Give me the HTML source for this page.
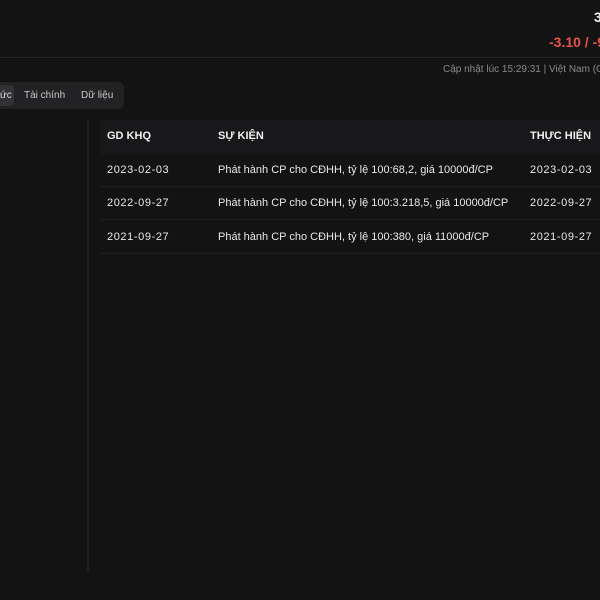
<!DOCTYPE html>
<html><head><meta charset="utf-8"><style>
*{margin:0;padding:0;box-sizing:border-box}
body{width:600px;height:600px;background:#131314;overflow:hidden;position:relative;font-family:"Liberation Sans",sans-serif;color:#e8e8e8}
.abs{position:absolute;white-space:nowrap}
.d{letter-spacing:0.6px}
</style></head><body>
<div class="abs" style="left:594px;top:9px;font-size:14px;font-weight:bold;color:#f0f0f0">3</div>
<div class="abs" style="left:549px;top:34px;font-size:14px;font-weight:bold;color:#e5534b">-3.10 / -9</div>
<div class="abs" style="left:0;top:57px;width:600px;height:1px;background:#262628"></div>
<div class="abs" style="left:443px;top:64px;font-size:10px;color:#8a8a8e">Cập nhật lúc 15:29:31 | Việt Nam (C</div>
<div class="abs" style="left:-10px;top:82px;width:134px;height:27px;background:#222224;border-radius:6px"></div>
<div class="abs" style="left:-10px;top:85px;width:24px;height:21px;background:#323235;border-radius:4px"></div>
<div class="abs" style="left:0;top:90px;font-size:10px;color:#ddd">ức</div>
<div class="abs" style="left:24px;top:90px;font-size:10px;color:#c8c8c8">Tài chính</div>
<div class="abs" style="left:81px;top:90px;font-size:10px;color:#c8c8c8">Dữ liệu</div>
<div class="abs" style="left:87px;top:120px;width:2px;height:452px;background:#1e1e20"></div>
<div class="abs" style="left:100px;top:120px;width:500px;height:34px;background:#18181a"></div>
<div class="abs" style="left:107px;top:130px;font-size:11px;font-weight:bold;color:#f0f0f0">GD KHQ</div>
<div class="abs" style="left:218px;top:130px;font-size:11px;font-weight:bold;color:#f0f0f0">SỰ KIỆN</div>
<div class="abs" style="left:530px;top:130px;font-size:11px;font-weight:bold;color:#f0f0f0">THỰC HIỆN</div>
<div class="abs" style="left:100px;top:186px;width:500px;height:1px;background:#1f1f21"></div>
<div class="abs" style="left:100px;top:219px;width:500px;height:1px;background:#1f1f21"></div>
<div class="abs" style="left:100px;top:253px;width:500px;height:1px;background:#1f1f21"></div>
<div class="abs d" style="left:107px;top:164px;font-size:11px">2023-02-03</div>
<div class="abs" style="left:218px;top:164px;font-size:11px">Phát hành CP cho CĐHH, tỷ lệ 100:68,2, giá 10000đ/CP</div>
<div class="abs d" style="left:530px;top:164px;font-size:11px">2023-02-03</div>
<div class="abs d" style="left:107px;top:197px;font-size:11px">2022-09-27</div>
<div class="abs" style="left:218px;top:197px;font-size:11px">Phát hành CP cho CĐHH, tỷ lệ 100:3.218,5, giá 10000đ/CP</div>
<div class="abs d" style="left:530px;top:197px;font-size:11px">2022-09-27</div>
<div class="abs d" style="left:107px;top:231px;font-size:11px">2021-09-27</div>
<div class="abs" style="left:218px;top:231px;font-size:11px">Phát hành CP cho CĐHH, tỷ lệ 100:380, giá 11000đ/CP</div>
<div class="abs d" style="left:530px;top:231px;font-size:11px">2021-09-27</div>
</body></html>
